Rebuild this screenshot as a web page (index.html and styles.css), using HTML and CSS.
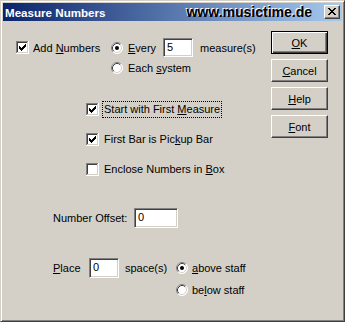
FILE: index.html
```html
<!DOCTYPE html>
<html lang="en">
  <head>
    <meta charset="UTF-8" />
    <title>Measure Numbers</title>
    <link rel="stylesheet" href="styles.css">
  </head>
  <body>
    <div class="window">
      <!-- Title bar -->
      <div class="titlebar">
        <span class="title">Measure Numbers</span>
        <span class="site">www.musictime.de</span>
        <span class="close">
          <svg width="14" height="12" viewBox="0 0 14 12" shape-rendering="crispEdges">
            <path fill="#000" d="M3 2h2v1h-2zM9 2h2v1h-2zM4 3h2v1h-2zM8 3h2v1h-2zM5 4h4v1h-4zM6 5h2v1h-2zM5 6h4v1h-4zM4 7h2v1h-2zM8 7h2v1h-2zM3 8h2v1h-2zM9 8h2v1h-2z"/>
          </svg>
        </span>
      </div>

      <div class="client">
        <div class="form">
          <div class="row-top">
            <div class="check add">
              <svg class="box" width="13" height="13" viewBox="0 0 13 13" shape-rendering="crispEdges">
                <use href="#sunken"/>
                <path fill="#000" d="M3 5h1v3h-1zM4 6h1v3h-1zM5 7h1v3h-1zM6 6h1v3h-1zM7 5h1v3h-1zM8 4h1v3h-1zM9 3h1v3h-1z"/>
              </svg>
              <span>Add <u>N</u>umbers</span>
            </div>
            <div class="radios">
              <div class="radio-row">
                <svg class="radio" width="12" height="12" viewBox="0 0 12 12"><use href="#radio"/><circle cx="6" cy="6" r="2" fill="#000"/></svg>
                <span class="every"><u>E</u>very</span>
                <span class="field every-field">5</span>
                <span class="after">measure(s)</span>
              </div>
              <div class="radio-row second">
                <svg class="radio" width="12" height="12" viewBox="0 0 12 12"><use href="#radio"/></svg>
                <span>Each <u>s</u>ystem</span>
              </div>
            </div>
          </div>

          <div class="checks">
            <div class="check">
              <svg class="box" width="13" height="13" viewBox="0 0 13 13" shape-rendering="crispEdges">
                <use href="#sunken"/>
                <path fill="#000" d="M3 5h1v3h-1zM4 6h1v3h-1zM5 7h1v3h-1zM6 6h1v3h-1zM7 5h1v3h-1zM8 4h1v3h-1zM9 3h1v3h-1z"/>
              </svg>
              <span class="text focus">Start with First <u>M</u>easure</span>
            </div>
            <div class="check">
              <svg class="box" width="13" height="13" viewBox="0 0 13 13" shape-rendering="crispEdges">
                <use href="#sunken"/>
                <path fill="#000" d="M3 5h1v3h-1zM4 6h1v3h-1zM5 7h1v3h-1zM6 6h1v3h-1zM7 5h1v3h-1zM8 4h1v3h-1zM9 3h1v3h-1z"/>
              </svg>
              <span class="text">First Bar is Pic<u>k</u>up Bar</span>
            </div>
            <div class="check">
              <svg class="box" width="13" height="13" viewBox="0 0 13 13" shape-rendering="crispEdges">
                <use href="#sunken"/>
              </svg>
              <span class="text">Enclose Numbers in <u>B</u>ox</span>
            </div>
          </div>

          <div class="offset-row">
            <span class="offset-label">Number Offset:</span>
            <span class="field offset-field">0</span>
          </div>

          <div class="place-row">
            <span class="place-label"><u>P</u>lace</span>
            <span class="field place-field">0</span>
            <span class="space-label">space(s)</span>
            <div class="radios">
              <div class="radio-row">
                <svg class="radio" width="12" height="12" viewBox="0 0 12 12"><use href="#radio"/><circle cx="6" cy="6" r="2" fill="#000"/></svg>
                <span><u>a</u>bove staff</span>
              </div>
              <div class="radio-row second">
                <svg class="radio" width="12" height="12" viewBox="0 0 12 12"><use href="#radio"/></svg>
                <span>be<u>l</u>ow staff</span>
              </div>
            </div>
          </div>
        </div>

        <div class="buttons">
          <div class="btn default"><span><u>O</u>K</span></div>
          <div class="btn"><span><u>C</u>ancel</span></div>
          <div class="btn"><span><u>H</u>elp</span></div>
          <div class="btn"><span><u>F</u>ont</span></div>
        </div>
      </div>
    </div>

    <!-- shared shapes -->
    <svg class="defs" width="0" height="0">
      <defs>
        <g id="sunken">
          <rect x="0" y="0" width="13" height="13" fill="#fff"/>
          <path fill="#808080" d="M0 0h12v1h-11v11h-1z"/>
          <path fill="#404040" d="M1 1h10v1h-9v9h-1z"/>
          <path fill="#d4d0c8" d="M11 1h1v11h-11v-1h10z"/>
          <rect x="2" y="2" width="9" height="9" fill="#fff"/>
        </g>
        <g id="radio">
          <circle cx="6" cy="6" r="5.5" fill="#fff"/>
          <path d="M2.11 9.89A5.5 5.5 0 0 1 9.89 2.11" fill="none" stroke="#808080"/>
          <path d="M9.89 2.11A5.5 5.5 0 0 1 2.11 9.89" fill="none" stroke="#fff"/>
          <path d="M2.82 9.18A4.5 4.5 0 0 1 9.18 2.82" fill="none" stroke="#404040"/>
          <path d="M9.18 2.82A4.5 4.5 0 0 1 2.82 9.18" fill="none" stroke="#d4d0c8"/>
        </g>
      </defs>
    </svg>
  </body>
</html>
```

FILE: styles.css
```css
* {
  box-sizing: border-box;
}
body {
  margin: 0;
  font-family: "Liberation Sans", Arial, sans-serif;
  font-size: 11px;
  color: #000;
  background-color: #d4d0c8;
}
.defs {
  position: absolute;
}
.window {
  width: 345px;
  height: 322px;
  background-color: #d4d0c8;
  border: 1px solid;
  border-color: #d4d0c8 #404040 #404040 #d4d0c8;
  box-shadow: inset 1px 1px #fff, inset -1px -1px #808080;
  padding: 2px;
  display: flex;
  flex-direction: column;
}
.titlebar {
  height: 18px;
  display: flex;
  align-items: center;
  background: linear-gradient(to right, #0a246a, #a6caf0);
}
.title {
  color: #fff;
  font-weight: bold;
  font-size: 11.6px;
  padding-left: 2px;
}
.site {
  margin-left: auto;
  margin-right: 12px;
  font-weight: bold;
  font-size: 14px;
  color: #000;
  text-shadow: -1px -1px 0 #fff;
}
.close {
  width: 16px;
  height: 14px;
  margin-right: 2px;
  border: 1px solid;
  border-color: #fff #404040 #404040 #fff;
  box-shadow: inset -1px -1px #808080;
  background-color: #d4d0c8;
  display: flex;
}
.client {
  flex: 1;
  display: flex;
}
.form {
  flex: 1;
  padding-left: 13px;
  padding-top: 17px;
}
.row-top {
  display: flex;
  align-items: flex-start;
}
.check {
  display: flex;
  align-items: center;
  height: 17px;
}
.check.add {
  width: 95px;
  height: 19px;
}
.box {
  margin-right: 4px;
  flex-shrink: 0;
}
.radios {
  display: flex;
  flex-direction: column;
}
.radio-row {
  display: flex;
  align-items: center;
  height: 19px;
}
.radio-row.second {
  margin-top: 2px;
  height: 18px;
}
.radio {
  margin-right: 5px;
  flex-shrink: 0;
}
.every {
  width: 35px;
}
.field {
  height: 19px;
  background-color: #fff;
  border: 1px solid;
  border-color: #808080 #fff #fff #808080;
  box-shadow: inset 1px 1px #404040, inset -1px -1px #d4d0c8;
  padding: 2px 0 0 3px;
  line-height: 13px;
}
.every-field {
  width: 30px;
}
.after {
  margin-left: 7px;
}
.checks {
  margin-top: 24px;
  margin-left: 70px;
  display: flex;
  flex-direction: column;
  gap: 13px;
}
.checks .box {
  margin-right: 3px;
}
.text {
  border: 1px dotted transparent;
  padding: 0 1px;
  line-height: 15px;
}
.text.focus {
  border-color: #000;
}
.offset-row {
  margin-top: 30px;
  margin-left: 37px;
  display: flex;
  align-items: center;
  height: 20px;
}
.offset-label {
  width: 81px;
}
.offset-field {
  width: 44px;
  height: 20px;
}
.place-row {
  margin-top: 30px;
  margin-left: 37px;
  display: flex;
  align-items: flex-start;
}
.place-label {
  width: 36px;
  line-height: 20px;
}
.place-field {
  width: 30px;
  height: 20px;
}
.space-label {
  margin-left: 6px;
  width: 51px;
  line-height: 20px;
}
.place-row .radio-row {
  height: 20px;
}
.place-row .radio {
  margin-right: 4px;
}
.buttons {
  width: 57px;
  margin-top: 10px;
  margin-right: 14px;
  display: flex;
  flex-direction: column;
  gap: 5px;
}
.btn {
  height: 23px;
  border: 1px solid;
  border-color: #fff #404040 #404040 #fff;
  box-shadow: inset -1px -1px #808080;
  display: flex;
  align-items: center;
  justify-content: center;
}
.btn.default {
  border-color: #000;
  box-shadow: inset 1px 1px #fff, inset -1px -1px #404040, inset -2px -2px #808080;
}
```
